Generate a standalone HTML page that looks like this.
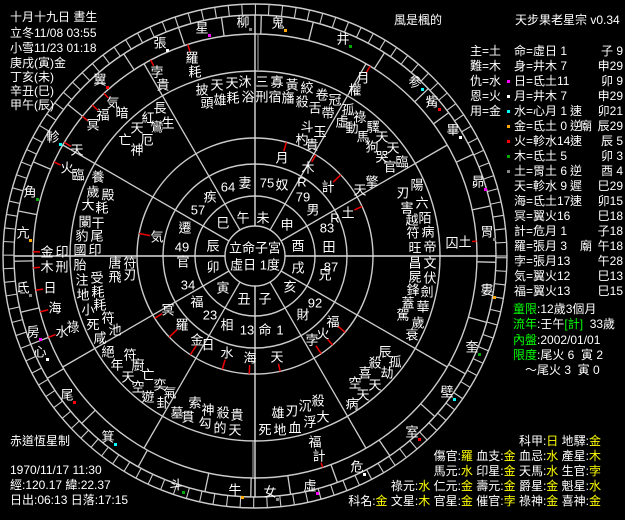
<!DOCTYPE html>
<html><head><meta charset="utf-8">
<style>
html,body{margin:0;padding:0;background:#000;}
svg{display:block;}
text{font-family:"Liberation Sans","WenQuanYi Zen Hei","Noto Sans CJK TC",sans-serif;font-size:13px;fill:#fff;dominant-baseline:central;white-space:pre;}
.i{font-size:12px;}
</style></head>
<body>
<svg id="s" xmlns="http://www.w3.org/2000/svg" width="625" height="520" viewBox="0 0 625 520">
<rect width="625" height="520" fill="#000"/>
<g id="g"></g>
<g class="i">
<text class="i" x="10" y="17">十月十九日 晝生</text>
<text class="i" x="10" y="33">立冬11/08 03:55</text>
<text class="i" x="10" y="48">小雪11/23 01:18</text>
<text class="i" x="10" y="63">庚戌(寅)金</text>
<text class="i" x="10" y="77">丁亥(未)</text>
<text class="i" x="10" y="91">辛丑(巳)</text>
<text class="i" x="10" y="105">甲午(辰)</text>
<text class="i" x="394" y="20">風是楓的</text>
<text class="i" x="515" y="20">天步果老星宗 v0.34</text>
<text class="i" x="10" y="441">赤道恆星制</text>
<text class="i" x="10" y="470">1970/11/17 11:30</text>
<text class="i" x="10" y="485">經:120.17 緯:22.37</text>
<text class="i" x="10" y="500">日出:06:13 日落:17:15</text>
</g>
</svg>
<script>
var NS="http://www.w3.org/2000/svg",g=document.getElementById('g'),s=document.getElementById('s');
var CX=255,CY=256;
function el(n,a,p){var e=document.createElementNS(NS,n);for(var k in a)e.setAttribute(k,a[k]);(p||g).appendChild(e);return e;}
function pt(r,a){a=a*Math.PI/180;return [CX+r*Math.cos(a),CY-r*Math.sin(a)];}
function ln(r1,r2,a,c,w){var p=pt(r1,a),q=pt(r2,a);el('line',{x1:p[0],y1:p[1],x2:q[0],y2:q[1],stroke:c||'#ccc','stroke-width':w||1.3});}
[30,60,92,118,185,222,241,252].forEach(function(r){el('circle',{cx:CX,cy:CY,r:r,fill:'none',stroke:'#ccc','stroke-width':1.4});});
for(var a=0;a<360;a+=30){ if(a%90==0) ln(30,241,a,'#ddd',1.4); else ln(30,222,a,'#ccc',1.3);}
for(var a=0;a<360;a+=3.1) ln(241,252,a,'#ccc',1.1);
var M=[['鬼',84,278,23,'#fa0'],['柳',93,243,22,'#888'],['星',103,202,28,'#f0f'],['張',114,160,43,'#fff'],['翼',132,100,80,'#f00'],['軫',150,53,137,'#0ff'],['角',164,30,192,'#0a0'],['亢',174.5,23,233,'#fa0'],['氐',188,23,288,'#888'],['房',199,33,332,'#f0f'],['心',204,40,352,'#fff'],['尾',217,67,395,'#f00'],['箕',231,108,437,'#0ff'],['斗',251,176,485,'#0a0'],['牛',265,235,490,'#fa0'],['女',273,270,492,'#888'],['虛',284,310,486,'#f0f'],['危',296,357,467,'#fff'],['室',312,412,432,'#f00'],['壁',324.5,447,392,'#0ff'],['奎',337,472,347,'#0a0'],['婁',351,487,290,'#fa0'],['胃',366,487,232,'#888'],['昴',378,478,182,'#f0f'],['畢',392,453,130,'#fff'],['觜',401,432,102,'#f00'],['参',407,415,82,'#0ff'],['井',428,343,39,'#0a0']];
for(var i=0;i<M.length;i++){var b=(M[i][1]+M[(i+1)%M.length][1]+(i==M.length-1?360:0))/2;ln(222,241,b,'#ccc',1.3);
 el('text',{x:M[i][2],y:M[i][3],'text-anchor':'middle'}).textContent=M[i][0];
 el('rect',{x:M[i][2]+6,y:M[i][3]+6,width:3,height:3,fill:M[i][4]});}
el('line',{x1:253,y1:441,x2:253,y2:478,stroke:'#888','stroke-width':1.3});
el('line',{x1:258,y1:33,x2:258,y2:71,stroke:'#888','stroke-width':1.3});
var W='#fff',Y='#ff0',G='#0f0',R='#f00',A='#999';
var T=[
[255,248,'立命子宮',W],[255,265,'虛日 1度',W],
[243,218,'午',W],[263,218,'未',W],[287,225,'申',W],[298,246,'酉',W],[298,268,'戌',W],[290,287,'亥',W],[265,299,'子',W],[244,299,'丑',W],[223,288,'寅',W],[213,267,'卯',W],[213,246,'辰',W],[223,223,'巳',W],
[245,183,'妻',W],[282,185,'奴',W],[313,210,'男',W],[329,247,'田',W],[325,275,'兄',W],[303,315,'財',W],[265,330,'命',W],[227,325,'相',W],[197,302,'福',W],[183,262,'官',W],[185,228,'遷',W],[210,197,'疾',W],
[228,187,'64',A],[267,183,'75',A],[303,197,'79',A],[327,228,'83',A],[331,267,'87',A],[315,303,'92',A],[280,330,'1',A],[247,330,'13',A],[210,315,'23',A],[188,285,'34',A],[182,247,'49',A],[198,210,'57',A],
[282,158,'月',G],[308,168,'木',G],[302,182,'R',R],[328,187,'計',G],[360,190,'天',W],[372,182,'擎',W],[348,213,'土',G],[335,218,'R',R],
[333,322,'福',G],[323,334,'火',G],[312,340,'孛',G],[157,237,'気',G],[168,310,'冥',G],[182,325,'羅',G],[197,340,'金',G],[208,345,'日',G],[227,353,'水',G],[250,358,'海',G],[277,357,'天',G],
[192,58,'羅',Y],[195,72,'耗',W],[157,72,'孛',Y],[163,85,'貴',W],[202,90,'披',W],[207,103,'頭',W],[217,85,'天',W],[220,100,'雄',W],[232,83,'天',W],[233,98,'耗',W],[245,82,'沐',W],[248,97,'浴',W],[262,82,'三',W],[262,97,'刑',W],[277,82,'寡',W],[275,97,'宿',W],[292,85,'黃',W],[288,98,'旛',W],[307,88,'絞',W],[302,102,'殺',W],[322,95,'卷',W],[315,108,'舌',W],[335,100,'冠',W],[328,113,'帶',W],[348,110,'孤',W],[342,122,'虛',W],[360,117,'祿',W],[352,128,'動',W],[373,127,'驛',W],[363,137,'馬',W],[382,137,'天',W],[372,147,'狗',W],[393,148,'天',W],[382,157,'哭',W],[390,167,'官',W],[402,162,'臨',W],
[307,127,'斗',W],[302,140,'杓',W],[320,132,'玉',W],[312,145,'貴',W],[363,78,'月',Y],[355,90,'權',W],
[160,108,'長',W],[168,123,'生',W],[148,118,'紅',W],[157,127,'鸞',W],[137,128,'天',W],[147,140,'厄',W],[125,140,'亡',W],[137,150,'神',W],
[122,113,'暗',W],[113,103,'気',Y],[103,115,'福',Y],[93,125,'冥',Y],[77,150,'天',Y],[67,168,'火',Y],[78,175,'臨',W],[98,177,'養',W],[93,192,'歲',W],[108,195,'殿',W],[88,205,'大',W],[102,208,'耗',W],[85,222,'闌',W],[98,223,'干',W],[82,236,'豹',W],[97,236,'尾',W],[80,250,'國',W],[95,250,'印',W],[47,252,'金',Y],[62,252,'印',W],[47,267,'木',Y],[62,267,'刑',W],[80,265,'胎',W],[115,263,'唐',W],[130,263,'符',W],[115,277,'飛',W],[130,275,'刃',W],[82,280,'注',W],[97,278,'受',W],[50,288,'日',Y],[83,295,'地',W],[98,292,'耗',W],[55,308,'海',Y],[88,310,'小',W],[100,305,'耗',W],[108,318,'符',W],[93,325,'死',W],[115,330,'池',W],[100,338,'咸',W],[62,332,'水',Y],[73,327,'祿',W],
[108,352,'絕',W],[130,355,'符',W],[117,365,'年',W],[138,365,'廚',W],[128,377,'天',W],[148,375,'亡',W],[138,387,'空',W],[160,385,'奕',W],[148,397,'遊',W],[170,393,'氣',W],[163,403,'卦',W],[177,413,'墓',W],[195,403,'索',W],[188,417,'貫',W],[208,410,'神',W],[205,423,'勾',W],[223,413,'殺',W],[220,428,'的',W],[237,415,'貴',W],[235,430,'天',W],
[278,413,'雄',W],[292,411,'刃',W],[305,406,'沉',W],[318,401,'殺',W],[310,422,'浮',W],[323,417,'大',W],[265,430,'死',W],[280,430,'地',W],[295,428,'血',W],[315,442,'福',W],[319,456,'計',Y],
[417,185,'陽',W],[403,193,'刃',W],[422,203,'六',W],[407,208,'害',W],[425,218,'陌',W],[412,220,'越',W],[428,232,'病',W],[413,233,'符',W],[430,247,'帝',W],[415,248,'旺',W],[430,263,'文',W],[415,263,'昌',W],[430,278,'伏',W],[415,277,'屍',W],[427,292,'劍',W],[413,290,'鋒',W],[423,307,'華',W],[408,303,'蓋',W],[418,323,'歲',W],[403,315,'駕',W],[412,335,'衰',W],[452,243,'囚',W],[465,242,'土',Y],
[385,352,'辰',W],[395,362,'孤',W],[375,363,'殺',W],[387,373,'劫',W],[365,373,'喜',W],[375,385,'天',W],[355,383,'空',W],[363,395,'天',W],[352,404,'病',W]
];
T.forEach(function(t){var e=el('text',{x:t[0],y:t[1],'text-anchor':'middle',fill:t[3]});e.textContent=t[2];});
var P=[[192,58,222],[157,72,222],[113,103,222],[103,115,222],[93,125,222],[77,150,222],[67,168,222],[47,252,222],[47,267,222],[50,288,222],[55,308,222],[62,332,222],[465,242,222],[363,78,222],[319,456,222],
[282,158,118],[308,168,118],[328,187,118],[348,213,118],[333,322,118],[323,334,118],[312,340,118],[157,237,118],[168,310,118],[182,325,118],[200,340,118],[227,353,118],[250,358,118],[277,357,118]];
P.forEach(function(p){var dx=p[0]-CX,dy=p[1]-CY,r=Math.sqrt(dx*dx+dy*dy),a=Math.atan2(-dy,dx)*180/Math.PI;ln(r+7,p[2],a,'#e00',1.5);});
var RT=[[51,'主=土','命=虛日 1','','','子 9',null],[66,'難=木','身=井木 7','','','申29',null],[81,'仇=水','日=氐土11','','','卯 9','#f0f'],[96,'恩=火','月=井木 7','','','申29','#fff'],[111,'用=金','水=心月 1','速','','卯21','#0ff'],[126,'','金=氐土 0','逆','廟','辰29','#fa0'],[141,'','火=軫水14','速','','辰 5','#f00'],[156,'','木=氐土 5','','','卯 3','#0a0'],[171,'','土=胃土 6','逆','','酉 4','#888'],[186,'','天=軫水 9','遲','','巳29',null],[201,'','海=氐土17','速','','卯15',null],[216,'','冥=翼火16','','','巳18',null],[231,'','計=危月 1','','','子18',null],[246,'','羅=張月 3','','廟','午18',null],[261,'','孛=張月13','','','午28',null],[276,'','気=翼火12','','','巳13',null],[291,'','福=翼火13','','','巳15',null]];
RT.forEach(function(r){var y=r[0];
 if(r[1])el('text',{x:470,y:y,'class':'i'}).textContent=r[1];
 el('text',{x:514,y:y,'class':'i',fill:'#ff0'}).textContent=r[2];
 if(r[3])el('text',{x:570,y:y,'class':'i',fill:'#f00'}).textContent=r[3];
 if(r[4])el('text',{x:580,y:y,'class':'i'}).textContent=r[4];
 el('text',{x:623,y:y,'class':'i','text-anchor':'end'}).textContent=r[5];
 if(r[6])el('rect',{x:507,y:y-1,width:3,height:3,fill:r[6]});});
function mix(x,y,parts,anchor){var e=el('text',{x:x,y:y,'class':'i','text-anchor':anchor||'start'});parts.forEach(function(p){var t=el('tspan',{fill:p[1]},e);t.textContent=p[0];});}
mix(513,309,[['童限',G],[':12歲3個月',W]]);
mix(513,324,[['流年',G],[':壬午',W],['[計]',G],['  33歲',W]]);
mix(513,340,[['內盤',G],[':2002/01/01',W]]);
mix(513,355,[['限度',G],[':尾火 6  寅 2',W]]);
mix(525,370,[['～尾火 3  寅 0',W]]);
mix(601,441,[['科甲:',W],['日',Y],[' 地驛:',W],['金',Y]],'end');
mix(601,456,[['傷官:',W],['羅',Y],[' 血支:',W],['金',Y],[' 血忌:',W],['水',Y],[' 產星:',W],['木',Y]],'end');
mix(601,471,[['馬元:',W],['水',Y],[' 印星:',W],['金',Y],[' 天馬:',W],['水',Y],[' 生官:',W],['孛',Y]],'end');
mix(601,486,[['祿元:',W],['水',Y],[' 仁元:',W],['金',Y],[' 壽元:',W],['金',Y],[' 爵星:',W],['金',Y],[' 魁星:',W],['水',Y]],'end');
mix(601,501,[['科名:',W],['金',Y],[' 文星:',W],['木',Y],[' 官星:',W],['金',Y],[' 催官:',W],['孛',Y],[' 祿神:',W],['金',Y],[' 喜神:',W],['金',Y]],'end');
</script>
</body></html>
